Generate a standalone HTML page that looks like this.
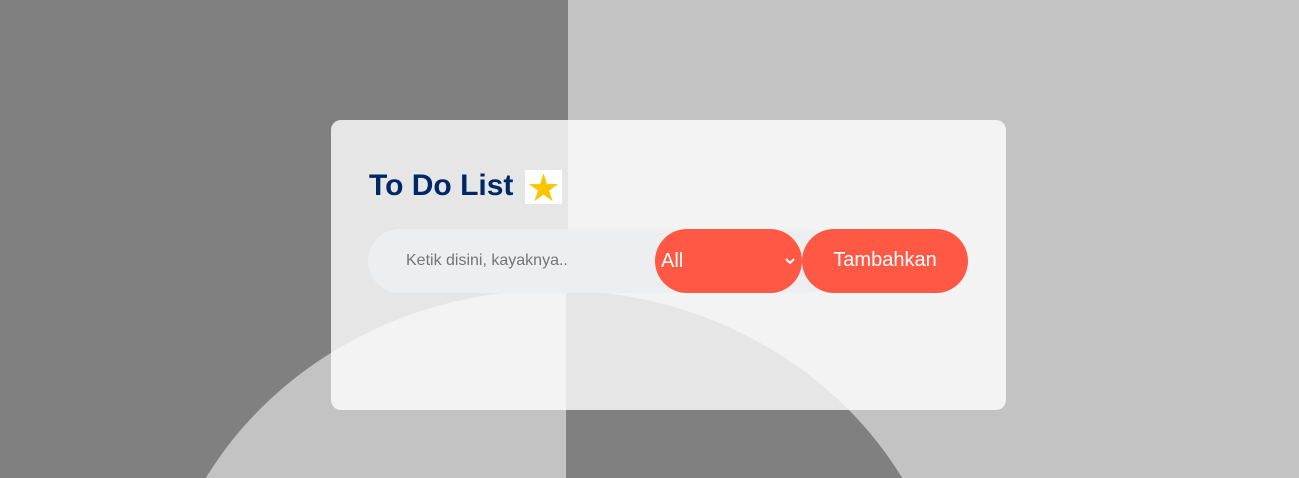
<!DOCTYPE html>
<html style="overflow:hidden;height:478px"><head><style>
body{margin:0;width:1299px;height:478px;overflow:hidden;position:relative;font-family:"Liberation Sans",Arial,sans-serif;background:#c3c3c3}
.wrap{position:absolute;left:0;top:0;width:1299px;height:478px;overflow:hidden}
.l{position:absolute;left:0;top:0;width:568px;height:478px;background:#808080}
.e{position:absolute;left:154px;top:290px;width:800px;height:740px;border-radius:50%;overflow:hidden}
.e .a{position:absolute;left:0;top:0;width:412px;height:100%;background:#c3c3c3}
.e .b{position:absolute;left:412px;top:0;width:400px;height:100%;background:#808080}
.card{position:absolute;left:331px;top:120px;width:675px;height:290px;border-radius:10px;background:rgba(255,255,255,0.8)}
h1{position:absolute;left:38px;top:49px;margin:0;font-size:30px;font-weight:bold;color:#002765}
.star{position:absolute;left:194px;top:50px;width:37px;height:34px;background:#fff;color:#ffc400;font-size:38px;line-height:38px;text-align:center}
.in{position:absolute;left:37px;top:109px;width:470px;height:64px;border-radius:32px;background:#eceef0}
.in span{position:absolute;left:38px;top:23px;font-size:16px;color:#757575}
.sel{position:absolute;left:324px;top:109px;width:147px;height:64px;border-radius:32px;background:#ff5945;color:#fff;font-size:20px}
.sel span{position:absolute;left:6px;top:21px}
.sel i{position:absolute;right:6px;top:24px;font-style:normal;font-size:14px}
.btn{position:absolute;left:471px;top:109px;width:166px;height:64px;border-radius:32px;background:#ff5945;color:#fff;font-size:20px;text-align:center;line-height:62px}
</style></head><body>
<div class="wrap">
<div class="l"></div>
<div class="e"><div class="a"></div><div class="b"></div></div>
<div class="card">
<h1>To Do List</h1><div class="star">★</div>
<div class="in"><span>Ketik disini, kayaknya..</span></div>
<div class="sel"><span>All</span><i><svg width="12" height="10" viewBox="0 0 12 10"><path d="M2 3l4 4 4-4" stroke="#fff" stroke-width="2" fill="none"/></svg></i></div>
<div class="btn">Tambahkan</div>
</div>
</div>
</body></html>
